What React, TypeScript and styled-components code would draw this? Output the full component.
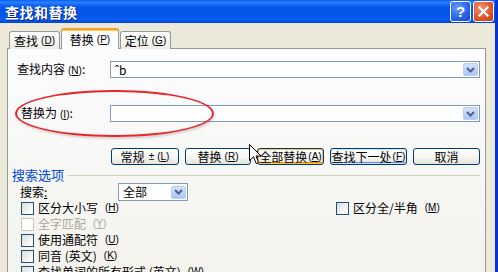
import React from 'react'
import styled, { createGlobalStyle, css } from 'styled-components'

const GlobalStyle = createGlobalStyle`
  html, body {
    margin: 0;
    padding: 0;
    background: #ece9d8;
  }
  body {
    font-family: "Noto Sans CJK SC", "Liberation Sans", sans-serif;
    font-size: 12px;
    color: #000;
  }
`

const CJK = '"Noto Sans CJK SC", "Liberation Sans", sans-serif'
const LATIN = '"Liberation Sans", "DejaVu Sans", sans-serif'

// mnemonic like (D) with the letter underlined
function Key({ k, dim, tight }: { k: string; dim?: boolean; tight?: boolean }) {
  return (
    <S.Key $dim={dim} $tight={tight}>
      (<u>{k}</u>)
    </S.Key>
  )
}

function DropButton() {
  return (
    <S.DropBtn>
      <svg width="9" height="6" viewBox="0 0 9 6">
        <path d="M1 1 L4.5 4.5 L8 1" fill="none" stroke="#4d6185" strokeWidth="2" />
      </svg>
    </S.DropBtn>
  )
}

function Check({ label, k, disabled }: { label: string; k: string; disabled?: boolean }) {
  return (
    <S.CheckRow $disabled={disabled}>
      <S.Box $disabled={disabled} />
      <span>{label}</span>
      <Key k={k} dim={disabled} />
    </S.CheckRow>
  )
}

export default function App() {
  return (
    <>
      <GlobalStyle />
      <S.Window>
        <S.TitleBar>
          <S.Title>查找和替换</S.Title>
          <S.TitleButtons>
            <S.CaptionBtn $kind="help">?</S.CaptionBtn>
            <S.CaptionBtn $kind="close">
              <svg width="11" height="11" viewBox="0 0 11 11">
                <path d="M1.5 1.5 L9.5 9.5 M9.5 1.5 L1.5 9.5" stroke="#fff" strokeWidth="2.2" strokeLinecap="square" />
              </svg>
            </S.CaptionBtn>
          </S.TitleButtons>
        </S.TitleBar>

        <S.Body>
          <S.Tabs>
            <S.Tab $w={51}>查找<Key k="D" /></S.Tab>
            <S.Tab $w={58} $active>替换<Key k="P" /></S.Tab>
            <S.Tab $w={51}>定位<Key k="G" /></S.Tab>
          </S.Tabs>

          <S.Panel>
            <S.FieldRow>
              <S.Label>查找内容<Key k="N" />:</S.Label>
              <S.Input>
                <S.InputText>ˆb</S.InputText>
                <DropButton />
              </S.Input>
            </S.FieldRow>

            <S.FieldRow $gap={27}>
              <S.Label $indent={4}>替换为<Key k="I" />:</S.Label>
              <S.Input>
                <S.InputText />
                <DropButton />
              </S.Input>
            </S.FieldRow>

            <S.ButtonRow>
              <S.Button $w={68}>常规 <S.PlusMinus>±</S.PlusMinus><Key k="L" tight /></S.Button>
              <S.Button $w={66}>替换<Key k="R" /></S.Button>
              <S.Button $w={67} $state="hover">全部替换<Key k="A" tight /></S.Button>
              <S.Button $w={77} $state="default">查找下一处<Key k="F" tight /></S.Button>
              <S.Button $w={67}>取消</S.Button>
            </S.ButtonRow>

            <S.GroupHeading>
              <span>搜索选项</span>
              <S.Rule />
            </S.GroupHeading>

            <S.SearchRow>
              <S.SearchLabel>
                搜索<u>:</u>
              </S.SearchLabel>
              <S.Combo>
                <S.InputText>全部</S.InputText>
                <DropButton />
              </S.Combo>
            </S.SearchRow>

            <S.Options>
              <S.CheckList>
                <Check label="区分大小写" k="H" />
                <Check label="全字匹配" k="Y" disabled />
                <Check label="使用通配符" k="U" />
                <Check label="同音 (英文)" k="K" />
                <Check label="查找单词的所有形式 (英文)" k="W" />
              </S.CheckList>
              <S.CheckList>
                <Check label="区分全/半角" k="M" />
              </S.CheckList>
            </S.Options>
          </S.Panel>
        </S.Body>

        <S.Ellipse />
        <S.Cursor width="13" height="21" viewBox="0 0 13 21">
          <path d="M0.5 0.5 L0.5 16.5 L4.5 12.8 L7.2 19.5 L9.6 18.5 L7 12 L12 12 Z" fill="#fff" stroke="#000" strokeWidth="1" strokeLinejoin="miter" />
        </S.Cursor>
      </S.Window>
    </>
  )
}

const xpButtonFace = 'linear-gradient(to bottom, #ffffff 0%, #f4f4f0 60%, #e3e2da 100%)'

export const S = {
  Window: styled.div`
    position: relative;
    width: 498px;
    height: 272px;
    overflow: hidden;
    background: #ece9d8;
    box-sizing: border-box;
    border-right: 3px solid #0734d6;
    display: flex;
    flex-direction: column;
  `,
  TitleBar: styled.div`
    height: 23px;
    flex: none;
    display: flex;
    align-items: center;
    justify-content: space-between;
    padding: 0 0 0 5px;
    background: linear-gradient(to bottom, #0a5ff0 0%, #2a80ff 10%, #0458ec 30%, #0053e6 60%, #0a5cf2 85%, #0047d6 100%);
  `,
  Title: styled.div`
    color: #fff;
    font-family: ${CJK};
    font-weight: 700;
    font-size: 14px;
    line-height: 16px;
    letter-spacing: 0.5px;
    text-shadow: 1px 1px 0 #0a1e88;
    margin-top: 1px;
  `,
  TitleButtons: styled.div`
    display: flex;
    gap: 2px;
    padding-right: 1px;
  `,
  CaptionBtn: styled.div<{ $kind: 'help' | 'close' }>`
    width: 19px;
    height: 19px;
    border: 1px solid #fff;
    border-radius: 3px;
    display: flex;
    align-items: center;
    justify-content: center;
    color: #fff;
    font-family: ${LATIN};
    font-weight: 700;
    font-size: 15px;
    line-height: 1;
    ${p =>
      p.$kind === 'help'
        ? css`
            background: radial-gradient(circle at 35% 30%, #6a9cff 0%, #2a66e8 55%, #1748c8 100%);
          `
        : css`
            background: radial-gradient(circle at 35% 30%, #f39070 0%, #e0572d 55%, #c13e18 100%);
          `}
  `,
  Body: styled.div`
    flex: 1;
    display: flex;
    flex-direction: column;
    padding: 6px 9px 0 7px;
    min-height: 0;
  `,
  Tabs: styled.div`
    display: flex;
    align-items: flex-end;
    height: 20px;
    padding-left: 2px;
    margin-bottom: -1px;
    position: relative;
    z-index: 1;
  `,
  Tab: styled.div<{ $w: number; $active?: boolean }>`
    width: ${p => p.$w}px;
    box-sizing: border-box;
    height: ${p => (p.$active ? 21 : 18)}px;
    display: flex;
    align-items: center;
    justify-content: center;
    font-family: ${CJK};
    font-size: 12px;
    line-height: 14px;
    white-space: nowrap;
    border: 1px solid #919b9c;
    border-bottom: none;
    border-radius: 3px 3px 0 0;
    margin-right: 1px;
    padding-top: ${p => (p.$active ? 1 : 0)}px;
    background: ${p => (p.$active ? '#fcfcfe' : 'linear-gradient(to bottom, #ffffff, #ecebe5)')};
    ${p =>
      p.$active &&
      css`
        border-top: 2px solid #f0a030;
        box-shadow: inset 0 1px 0 #ffc84a;
      `}
  `,
  Panel: styled.div`
    flex: 1;
    border: 1px solid #919b9c;
    border-bottom: none;
    background: linear-gradient(to bottom, #fcfcfe 0%, #f7f7f5 50%, #f3f2ec 100%);
    padding: 12px 5px 0 4px;
    display: flex;
    flex-direction: column;
  `,
  FieldRow: styled.div<{ $gap?: number }>`
    display: grid;
    grid-template-columns: 93px 1fr;
    align-items: center;
    margin-left: 5px;
    margin-top: ${p => p.$gap ?? 0}px;
  `,
  Label: styled.div<{ $indent?: number }>`
    font-family: ${CJK};
    font-size: 12px;
    line-height: 14px;
    padding-left: ${p => p.$indent ?? 0}px;
    white-space: nowrap;
  `,
  Key: styled.span<{ $dim?: boolean; $tight?: boolean }>`
    font-family: ${LATIN};
    font-size: 10px;
    margin-left: ${p => (p.$tight ? 1 : 3)}px;
    color: ${p => (p.$dim ? '#aca899' : 'inherit')};
    u {
      text-underline-offset: 1px;
    }
  `,
  Input: styled.div`
    height: 17px;
    box-sizing: border-box;
    border: 1px solid #7f9db9;
    background: #fff;
    display: flex;
    align-items: center;
    padding-right: 1px;
  `,
  InputText: styled.div`
    flex: 1;
    padding-left: 4px;
    font-size: 12px;
    line-height: 14px;
    font-family: ${CJK};
  `,
  DropBtn: styled.div`
    width: 15px;
    height: 13px;
    box-sizing: border-box;
    border: 1px solid #b9cdf5;
    border-radius: 2px;
    background: linear-gradient(to bottom, #d5e2fd 0%, #bccff9 60%, #aec4f4 100%);
    display: flex;
    align-items: center;
    justify-content: center;
  `,
  ButtonRow: styled.div`
    display: flex;
    justify-content: flex-end;
    gap: 6px;
    margin-top: 26px;
  `,
  Button: styled.div<{ $w: number; $state?: 'hover' | 'default' }>`
    width: ${p => p.$w}px;
    height: 17px;
    box-sizing: border-box;
    border: 1px solid #003c74;
    border-radius: 3px;
    background: ${xpButtonFace};
    display: flex;
    align-items: center;
    justify-content: center;
    font-family: ${CJK};
    font-size: 12px;
    line-height: 14px;
    white-space: nowrap;
    ${p =>
      p.$state === 'hover' &&
      css`
        box-shadow: inset 0 0 0 1px #f9c055, inset 0 -1px 0 1px #e59700;
      `}
    ${p =>
      p.$state === 'default' &&
      css`
        box-shadow: inset 0 0 0 1px #cee7ff, inset 0 -1px 0 1px #6982ee;
      `}
  `,
  PlusMinus: styled.span`
    font-family: ${LATIN};
    font-size: 10px;
    margin: 0 2px 0 4px;
  `,
  GroupHeading: styled.div`
    display: flex;
    align-items: center;
    margin-top: 3px;
    height: 14px;
    color: #0046d5;
    font-family: ${CJK};
    font-size: 13px;
    line-height: 14px;
  `,
  Rule: styled.div`
    flex: 1;
    height: 1px;
    background: #d0d0bf;
    margin: 1px 0 0 4px;
  `,
  SearchRow: styled.div`
    display: grid;
    grid-template-columns: 98px 70px;
    align-items: center;
    margin-top: 1px;
    padding-left: 8px;
  `,
  SearchLabel: styled.div`
    font-family: ${CJK};
    font-size: 12px;
    line-height: 14px;
  `,
  Combo: styled.div`
    height: 18px;
    box-sizing: border-box;
    border: 1px solid #7f9db9;
    background: #fff;
    display: flex;
    align-items: center;
    padding-right: 1px;
  `,
  Options: styled.div`
    display: grid;
    grid-template-columns: 315px 1fr;
    margin-top: -1px;
    padding-left: 9px;
  `,
  CheckList: styled.div`
    display: flex;
    flex-direction: column;
  `,
  CheckRow: styled.div<{ $disabled?: boolean }>`
    height: 16px;
    display: flex;
    align-items: center;
    gap: 4px;
    font-family: ${CJK};
    font-size: 12px;
    line-height: 14px;
    white-space: nowrap;
    color: ${p => (p.$disabled ? '#aca899' : '#000')};
  `,
  Box: styled.div<{ $disabled?: boolean }>`
    width: 13px;
    height: 13px;
    box-sizing: border-box;
    flex: none;
    border: 1px solid ${p => (p.$disabled ? '#cac8bb' : '#1c5180')};
    background: ${p => (p.$disabled ? '#fff' : 'linear-gradient(135deg, #dcdcd7 0%, #f4f4f0 60%, #ffffff 100%)')};
  `,
  Ellipse: styled.div`
    position: absolute;
    left: 15px;
    top: 90px;
    width: 199px;
    height: 47px;
    box-sizing: border-box;
    border: 2px solid #e8262a;
    border-radius: 100px / 24px;
    box-shadow: 1px 2px 2px rgba(0, 0, 0, 0.15);
    pointer-events: none;
  `,
  Cursor: styled.svg`
    position: absolute;
    left: 249px;
    top: 144px;
  `
}
